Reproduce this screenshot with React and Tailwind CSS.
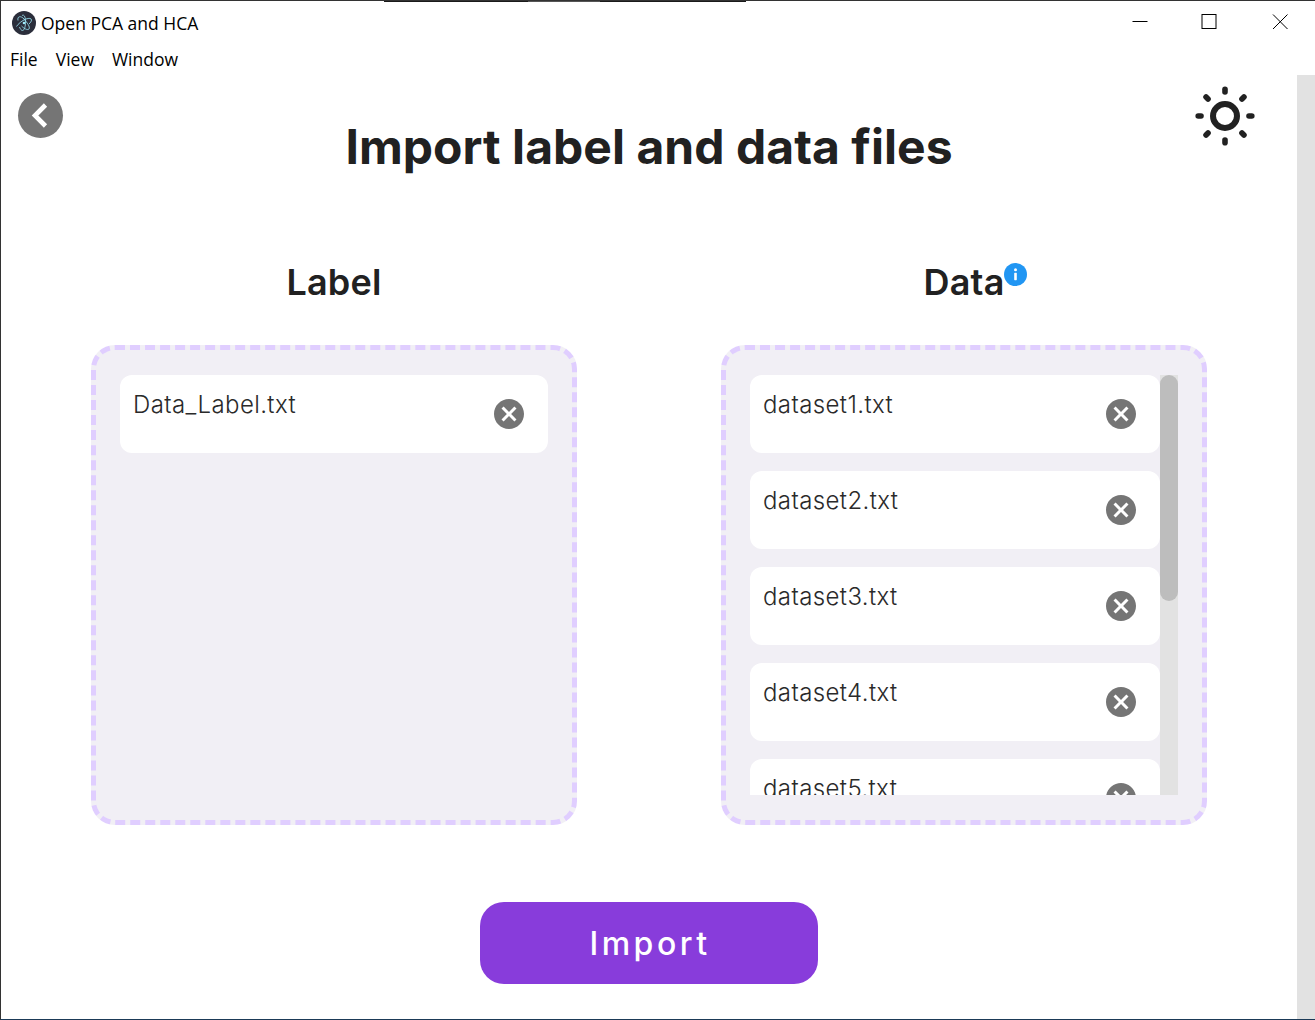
const DATA_FILES = ['dataset1.txt', 'dataset2.txt', 'dataset3.txt', 'dataset4.txt', 'dataset5.txt']

function ElectronLogo() {
  return (
    <svg width="24" height="24" viewBox="0 0 24 24" fill="none">
      <circle cx="12" cy="12" r="12" fill="#2b2e3b" />
      <g stroke="#9feaf9" strokeWidth="0.8">
        <path d="M6 9.5C5 5 9 4.5 12 8c3 3.5 6.5 8 5 10-1.5 1.5-5-.5-7.5-3" />
        <path d="M4.5 15.5C6 13 10 9.5 14 8c3-1 5.5-.8 5.5 1 0 1.2-1 2.6-2.5 4" />
        <path d="M10 4.5c2.5-1.5 3.5 2 3.5 6.5 0 4-1 8.5-3 8.5-1.2 0-2.2-1.5-3-3.5" />
      </g>
      <circle cx="12" cy="12" r="1.3" fill="#9feaf9" />
    </svg>
  )
}

function WindowControls() {
  return (
    <div className="-mt-[2px] flex items-center text-black">
      <svg width="16" height="16" viewBox="0 0 16 16" className="mr-[53px]">
        <path d="M0.5 7.5H15.5" stroke="#000" strokeWidth="1" />
      </svg>
      <svg width="16" height="16" viewBox="0 0 16 16" className="mr-[55px]">
        <rect x="1" y="0.5" width="14" height="14" fill="none" stroke="#000" strokeWidth="1" />
      </svg>
      <svg width="16" height="16" viewBox="0 0 16 16" className="mr-[27px]">
        <path d="M1 0.5L15.5 15M15.5 0.5L1 15" stroke="#000" strokeWidth="1" fill="none" />
      </svg>
    </div>
  )
}

function SunIcon() {
  const rays = [0, 45, 90, 135, 180, 225, 270, 315]
  return (
    <svg width="60" height="60" viewBox="-30 -30 60 60" fill="none" stroke="#212121">
      <circle r="12" strokeWidth="6" />
      {rays.map((deg) => (
        <path key={deg} d="M0 -26.8V-24" strokeWidth="5.6" strokeLinecap="round" transform={`rotate(${deg})`} />
      ))}
    </svg>
  )
}

function RemoveIcon() {
  return (
    <svg width="36" height="36" viewBox="0 0 24 24" fill="#757575" className="-mt-[1px] shrink-0">
      <path d="M12 2C6.47 2 2 6.47 2 12s4.47 10 10 10 10-4.47 10-10S17.53 2 12 2zm5 13.59L15.59 17 12 13.41 8.41 17 7 15.59 10.59 12 7 8.41 8.41 7 12 10.59 15.59 7 17 8.41 13.41 12 17 15.59z" />
    </svg>
  )
}

function FileRow({ name }) {
  return (
    <div className="flex h-[78px] shrink-0 items-center justify-between rounded-xl bg-white pl-[13px] pr-[21.5px]">
      <span className="-mt-[18px] text-[24px] leading-9 font-light tracking-[0.4px] text-[#2a2a2a]">{name}</span>
      <RemoveIcon />
    </div>
  )
}

function DropZone({ children }) {
  return (
    <div className="box-border flex h-[480px] w-[486px] rounded-3xl border-[5px] border-dashed border-[#e0ceff] bg-[#f1eff5] px-[24px] pt-[25px] pb-[25px]">
      {children}
    </div>
  )
}

export default function App() {
  return (
    <div className="relative box-border flex h-[1020px] w-[1315px] flex-col overflow-hidden border-t border-b border-l border-t-[#333333] border-b-[#1b3a57] border-l-[#333333] bg-white font-['Inter',sans-serif]">
      {/* top edge of the window behind */}
      <div className="absolute top-0 left-[383px] h-[1px] w-[362px] bg-[#1a1a1a]" />
      <div className="absolute top-0 left-[527px] h-[1px] w-[72px] bg-[#555555]" />

      <header className="flex h-[44px] shrink-0 items-center justify-between pl-[11px] font-['Open_Sans',sans-serif] text-black">
        <div className="flex items-center gap-[5px]">
          <ElectronLogo />
          <span className="text-[17.5px]">Open PCA and HCA</span>
        </div>
        <WindowControls />
      </header>

      <nav className="flex h-[30px] shrink-0 items-center gap-[18px] pb-[2px] pl-[9px] font-['Open_Sans',sans-serif] text-[17.5px] text-black">
        <span>File</span>
        <span>View</span>
        <span>Window</span>
      </nav>

      <div className="flex min-h-0 flex-1">
        <main className="flex min-w-0 flex-1 flex-col items-center">
          <div className="grid w-full grid-cols-[1fr_auto_1fr] items-start">
            <button className="mt-[18px] ml-[17px] flex h-[45px] w-[45px] items-center justify-center rounded-full bg-[#757575]">
              <svg width="45" height="45" viewBox="0 0 45 45" fill="none">
                <path d="M27.5 12L17 22.5L27.5 33" stroke="#fff" strokeWidth="4.6" />
              </svg>
            </button>
            <h1 className="mt-[44px] text-[48px] leading-[56px] font-bold tracking-[0.04px] whitespace-nowrap text-[#212121]">
              Import label and data files
            </h1>
            <div className="mt-[11px] mr-[42px] justify-self-end">
              <SunIcon />
            </div>
          </div>

          <div className="mt-[85px] flex gap-[144px]">
            <section className="flex flex-col items-center">
              <h2 className="text-[36px] leading-[44px] font-semibold tracking-[0.2px] text-[#212121]">Label</h2>
              <div className="mt-[41px]">
                <DropZone>
                  <div className="w-full">
                    <FileRow name="Data_Label.txt" />
                  </div>
                </DropZone>
              </div>
            </section>

            <section className="flex flex-col items-center">
              <h2 className="relative text-[36px] leading-[44px] font-semibold tracking-[0.2px] text-[#212121]">
                Data
                <span className="absolute top-[3px] left-full -ml-[1px] flex h-[23px] w-[23px] items-center justify-center rounded-full bg-[#2196f3]">
                  <svg width="23" height="23" viewBox="0 0 23 23" fill="#fff">
                    <circle cx="11.5" cy="6.8" r="1.5" />
                    <rect x="10.2" y="9.8" width="2.6" height="7.4" rx="0.6" />
                  </svg>
                </span>
              </h2>
              <div className="mt-[41px]">
                <DropZone>
                  <div className="flex min-w-0 flex-1 flex-col gap-[18px] overflow-hidden">
                    {DATA_FILES.map((name) => (
                      <FileRow key={name} name={name} />
                    ))}
                  </div>
                  <div className="h-full w-[18px] shrink-0 bg-[#e2e2e2]">
                    <div className="h-[226px] w-full rounded-[9px] bg-[#bdbdbd]" />
                  </div>
                </DropZone>
              </div>
            </section>
          </div>

          <button className="mt-[77px] h-[82px] w-[338px] rounded-3xl bg-[#883cdb] pt-[2px] pl-[2px] text-[32px] font-medium tracking-[3.5px] text-white">
            Import
          </button>
        </main>

        <div className="w-[18px] shrink-0 bg-[#e2e2e2]" />
      </div>
    </div>
  )
}
